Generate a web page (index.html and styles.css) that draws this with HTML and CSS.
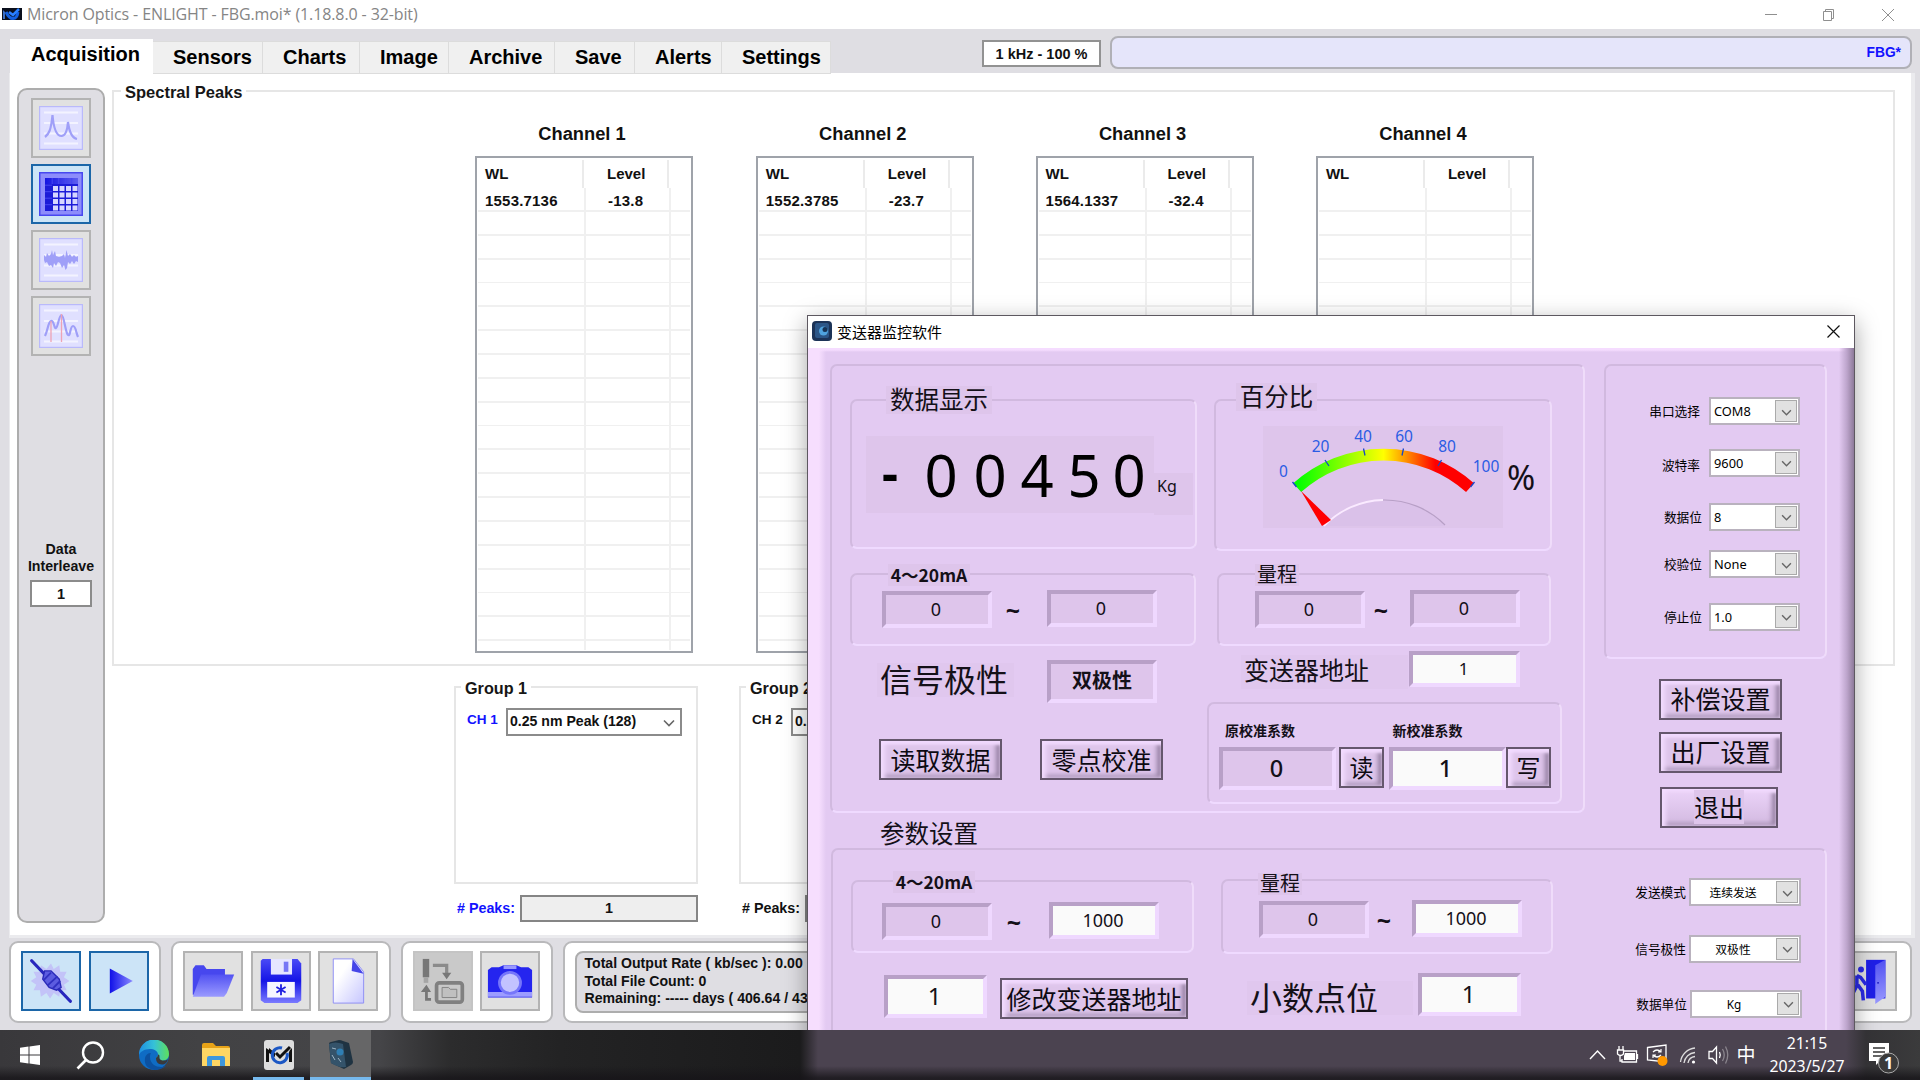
FILE: index.html
```html
<!DOCTYPE html>
<html lang="zh-CN">
<head>
<meta charset="utf-8">
<title>Micron Optics - ENLIGHT</title>
<link rel="stylesheet" href="styles.css">
</head>
<body>
<svg class="defs" width="0" height="0" aria-hidden="true">
  <defs>
    <linearGradient id="blueV" x1="0" y1="0" x2="0" y2="1"><stop offset="0" stop-color="#4a4af6"/><stop offset=".5" stop-color="#1414e6"/><stop offset="1" stop-color="#7b7bff"/></linearGradient>
    <linearGradient id="blueH" x1="0" y1="0" x2="1" y2="0"><stop offset="0" stop-color="#1010e8"/><stop offset="1" stop-color="#8a8aff"/></linearGradient>
    <linearGradient id="folderG" x1="0" y1="0" x2="0" y2="1"><stop offset="0" stop-color="#5252f2"/><stop offset="1" stop-color="#9a9aff"/></linearGradient>
    <linearGradient id="paperG" x1="0" y1="0" x2="1" y2="1"><stop offset=".3" stop-color="#fff"/><stop offset="1" stop-color="#c6c6ff"/></linearGradient>
    <linearGradient id="edgeG" x1="0" y1="0" x2="1" y2="0"><stop offset="0" stop-color="#1e8fe0"/><stop offset=".5" stop-color="#35c1d8"/><stop offset="1" stop-color="#5fe05a"/></linearGradient>
    <linearGradient id="gaugeG" gradientUnits="userSpaceOnUse" x1="34" y1="0" x2="207" y2="0"><stop offset="0" stop-color="#00ff00"/><stop offset=".5" stop-color="#ffff00"/><stop offset=".8" stop-color="#ff0000"/><stop offset="1" stop-color="#ff0000"/></linearGradient>
    <symbol id="chev" viewBox="0 0 12 8"><path d="M1 1.500 6 6.500 11 1.500" fill="none" stroke="#666" stroke-width="1.600"/></symbol>
    <symbol id="frame" viewBox="0 0 44 44"><rect x=".5" y=".5" width="43" height="43" fill="#e0e0ff" stroke="#b9b9fb" stroke-width="1.400"/><path d="M5 6.500h34M5 17h34M5 27.500h34M5 37.500h34" stroke="#f3f3ff" stroke-width="2"/></symbol>
  </defs>
</svg>

<div class="desktop">
  <header class="titlebar">
    <svg class="app-logo" viewBox="0 0 20 12"><rect width="20" height="12" fill="#0a0f1c"/><path d="M4 4Q7 10.500 11 10.500T16 4" stroke="#1360e0" stroke-width="3" fill="none"/><path d="M7 4l4 3 6-6" stroke="#2a80ff" stroke-width="2.500" fill="none"/><path d="M1 11V2l2 2v7z" fill="#3b6fc4"/></svg>
    <span class="titlebar-text">Micron Optics - ENLIGHT - FBG.moi* (1.18.8.0 - 32-bit)</span>
    <svg class="win-controls" viewBox="0 0 130 14"><path d="M1 6.500h12M118 1l12 12M130 1l-12 12" stroke="#8f8f8f" fill="none"/><path d="M59.500 3.500h8v9h-8zM61.500 3.500v-2h8v9h-2" stroke="#8f8f8f" fill="none"/></svg>
  </header>

  <div class="workspace">
    <nav class="tabbar">
      <span class="tab tab-active">Acquisition</span>
      <span class="tab t-sensors">Sensors</span>
      <span class="tab t-charts">Charts</span>
      <span class="tab t-image">Image</span>
      <span class="tab t-archive">Archive</span>
      <span class="tab t-save">Save</span>
      <span class="tab t-alerts">Alerts</span>
      <span class="tab t-settings">Settings</span>
      <span class="rate-box">1 kHz - 100 %</span>
      <span class="config-name">FBG*</span>
    </nav>

    <main class="page">
      <aside class="toolbox">
        <button class="tool"><svg class="ic44" viewBox="0 0 44 44"><use href="#frame"/><path d="M6 31C10 28 12 24 13.500 9c1 12 4 21 9 21s6-8 6.500-14C30 24 33 32 38 33" fill="none" stroke="#9f9ff8" stroke-width="2.200"/></svg></button>
        <button class="tool tool-on"><svg class="ic44" viewBox="0 0 44 44"><rect x=".7" y=".7" width="42.600" height="42.600" fill="#8d8dfb" stroke="#4848f0" stroke-width="1.600"/><rect x="6" y="6" width="33" height="33" fill="#1c1cd8"/><path d="M6 6h33v6H6z" fill="url(#blueH)" opacity=".6"/><path d="M14 14h5v5h-5zm6.500 0h5v5h-5zm6.500 0h5v5h-5zm6.500 0h5v5h-5zM14 20.500h5v5h-5zm6.500 0h5v5h-5zm6.500 0h5v5h-5zm6.500 0h5v5h-5zM14 27h5v5h-5zm6.500 0h5v5h-5zm6.500 0h5v5h-5zm6.500 0h5v5h-5zM14 33.500h5v5h-5zm6.500 0h5v5h-5zm6.500 0h5v5h-5zm6.500 0h5v5h-5z" fill="#d6d6ff"/><path d="M6 13.200h7M6 19.700h7M6 26.200h7M6 32.700h7M13.200 6v6M19.700 6v6M26.200 6v6M32.700 6v6" stroke="#4646f2"/></svg></button>
        <button class="tool"><svg class="ic44" viewBox="0 0 44 44"><use href="#frame"/><path d="M5 17 7 19 8 15 10 18 12 16 13 12 14 17 16 13 17 18 20 19 23 18 25 16 26 20 27.500 12 29 18 31 16 33 19 35 17 37 19 39 18V24L37 23 35 26 33 23 31 26 29 24 28 30 26.500 32 25 27 23 30 21 25 19 24 17 28 15 25 14 30 12 27 10 28 8 24 6 25 5 22z" fill="#9f9ff8"/></svg></button>
        <button class="tool"><svg class="ic44" viewBox="0 0 44 44"><use href="#frame"/><path d="M6 32 C9 26 9 18 12 17s3 8 5 7 3-13 5.500-13 4 18 6.500 20 2-9 5-9 3 7 5 11" fill="none" stroke="#9f9ff8" stroke-width="2.200"/><path d="M12 17v21M22.500 10v28" stroke="#efa3b4" stroke-width="1.300"/></svg></button>
        <span class="interleave-label">Data<br>Interleave</span>
        <span class="interleave-value">1</span>
      </aside>

      <div class="content">
        <section class="spectral">
          <h2 class="box-legend spectral-legend">Spectral Peaks</h2>
          <div class="channels">
            <div class="channel"><h3>Channel 1</h3><div class="peaks"><div class="peaks-head"><span>WL</span><span>Level</span><i></i></div><div class="peaks-rows"><div class="peak"><span>1553.7136</span><span>-13.8</span></div></div></div></div>
            <div class="channel ch-two"><h3>Channel 2</h3><div class="peaks"><div class="peaks-head"><span>WL</span><span>Level</span><i></i></div><div class="peaks-rows"><div class="peak"><span>1552.3785</span><span>-23.7</span></div></div></div></div>
            <div class="channel"><h3>Channel 3</h3><div class="peaks"><div class="peaks-head"><span>WL</span><span>Level</span><i></i></div><div class="peaks-rows"><div class="peak"><span>1564.1337</span><span>-32.4</span></div></div></div></div>
            <div class="channel"><h3>Channel 4</h3><div class="peaks"><div class="peaks-head"><span>WL</span><span>Level</span><i></i></div><div class="peaks-rows"></div></div></div>
          </div>
        </section>
        <div class="groups">
          <div class="group">
            <section class="group-box"><h2 class="box-legend group-legend">Group 1</h2>
              <div class="ch-row"><span class="ch-label blue">CH 1</span><span class="ch-select">0.25 nm Peak (128)<svg class="chev"><use href="#chev"/></svg></span></div>
            </section>
            <div class="peak-count"><span class="blue">#&nbsp;Peaks:</span><output>1</output></div>
          </div>
          <div class="group">
            <section class="group-box"><h2 class="box-legend group-legend">Group 2</h2>
              <div class="ch-row"><span class="ch-label">CH 2</span><span class="ch-select">0.25 nm</span></div>
            </section>
            <div class="peak-count"><span>#&nbsp;Peaks:</span><output></output></div>
          </div>
        </div>
      </div>
    </main>

    <footer class="actions">
      <div class="action-group">
        <button class="tool tool-on"><svg class="ic50" viewBox="0 0 50 50"><path d="M25 6l3 6 6-4 1 7 7 0-3 6 6 4-6 4 3 6-7 0-1 7-6-4-4 6-4-6-6 4-1-7-7 0 3-6-6-4 6-4-3-6 7 0 1-7 6 4z" fill="#c3c3f8"/><path d="M4 3 46 47" stroke="#2727bd" stroke-width="3.500" stroke-linecap="round"/><path d="M18 14l7 0 9 9 2 9-5 3-8-3-7-9z" fill="#5c5ce0" stroke="#2929b8" stroke-width="1.500"/><path d="M17 24l8-8M21 30l11-10M27 33l8-8" stroke="#3030c0" stroke-width="2"/></svg></button>
        <button class="tool tool-on"><svg class="ic50" viewBox="0 0 50 50"><path d="M15 11.500 40 25 15 38.500z" fill="url(#blueH)"/></svg></button>
      </div>
      <div class="action-group">
        <button class="tool"><svg class="ic50" viewBox="0 0 50 50"><path d="M3 40V12l3-4h9l3 4h20v8H18L7 40z" fill="#4747ee"/><path d="M12 18h36l-8 20-3 4H3z" fill="url(#folderG)"/></svg></button>
        <button class="tool"><svg class="ic50" viewBox="0 0 50 50"><path d="M5 1h38l4 5v40l-4 3H7l-4-3V3z" fill="url(#blueV)"/><rect x="14" y="1" width="23" height="17" fill="#e6e6ff"/><rect x="28" y="4" width="5" height="11" fill="#7676f5"/><rect x="10" y="26" width="30" height="17" fill="#f5f5ff"/><path d="M25 28.500v12M20 31.500l10 6M30 31.500l-10 6" stroke="#2020e0" stroke-width="2"/></svg></button>
        <button class="tool"><svg class="ic50" viewBox="0 0 50 50"><path d="M9 1h22l11 14v34H9z" fill="url(#paperG)" stroke="#8a8af5"/><path d="M30 1 42 17 29 14z" fill="#4646e8"/></svg></button>
      </div>
      <div class="action-group">
        <button class="tool tool-off"><svg class="ic50" viewBox="0 0 50 50"><rect x="3" y="1" width="7" height="20" fill="#777"/><path d="M4 21h5v6H4z" fill="#a5a5a5"/><path d="M14 8h15v10" fill="none" stroke="#8b8b8b" stroke-width="3.500"/><path d="M24 16h10l-5 7zM1 37l6-8 5 8z" fill="#777"/><path d="M7 36v9h5" fill="none" stroke="#777" stroke-width="3"/><rect x="18" y="27" width="28" height="21" rx="3" fill="none" stroke="#808080" stroke-width="4"/><path d="M24 32h7l2 2h7v9H24z" fill="#c0c0c0" stroke="#808080"/></svg></button>
        <button class="tool"><svg class="ic50" viewBox="0 0 50 50"><path d="M1 13l4-3h8l5-2h14l5 2h8l4 3v30H1z" fill="#2525ef"/><path d="M1 37h48v5H1z" fill="#9c9cff"/><circle cx="25" cy="27" r="11.500" fill="#c3c3ff" stroke="#7676fa" stroke-width="3"/><path d="M18 8h14v4H18z" fill="#9898ff"/></svg></button>
      </div>
      <div class="action-group action-status">
        <p class="status-text"><span>Total Output Rate ( kb/sec ): 0.00</span><span>Total File Count: 0</span><span>Remaining: ----- days ( 406.64 / 437</span></p>
        <button class="tool"><svg class="ic50" viewBox="0 0 50 50"><path d="M24 2h21v42H24z" fill="#1f1fe8"/><path d="M34 8l11-6v40l-11 8z" fill="url(#folderG)"/><circle cx="37" cy="27" r="1" fill="#1515c0"/><circle cx="18.500" cy="12.500" r="3.200" fill="#2a2ae8"/><path d="M14 19l4 2 6 8M14 19v11l-5 10M15 29l5 7 1 10" stroke="#2a2ae8" stroke-width="3.800" fill="none"/></svg></button>
      </div>
    </footer>
  </div>

  <div class="dialog">
    <header class="dialog-title">
      <svg class="dlg-icon" viewBox="0 0 20 20"><rect width="20" height="20" rx="4" fill="#1c3357"/><rect x="3" y="2" width="14" height="15" rx="2" fill="#2c5687"/><circle cx="11.500" cy="10" r="4.500" fill="#4fa3df"/><circle cx="13" cy="8.500" r="2.500" fill="#173355"/></svg>
      <span>变送器监控软件</span>
      <svg class="dlg-close" viewBox="0 0 13 13"><path d="M.5.5l12 12M12.500.5l-12 12" stroke="#111" stroke-width="1.200"/></svg>
    </header>
    <div class="dialog-body">
      <div class="top">
        <section class="panel panel-main">
          <div class="row row-display">
            <div class="panel p-data"><h4 class="legend lg-data">数据显示</h4>
              <div class="readout"><div class="digits"><b>-</b><span>0</span><span>0</span><span>4</span><span>5</span><span>0</span></div><span class="unit">Kg</span></div>
            </div>
            <div class="panel p-percent"><h4 class="legend lg-percent">百分比</h4>
              <div class="gauge-row">
                <svg class="gauge" viewBox="0 0 240 102">
                  <path d="M61 100A85 85 0 0 1 182 100z" fill="#dac1e9"/>
                  <path d="M34.200 61.700A129.400 129.400 0 0 1 207 61.700" fill="none" stroke="url(#gaugeG)" stroke-width="11.800"/>
                  <path d="M61 100A85 85 0 0 1 120 74" fill="none" stroke="#faeaff" stroke-width="1.800"/>
                  <path d="M120 74A85 85 0 0 1 182 99" fill="none" stroke="#b79fc6" stroke-width="1.200"/>
                  <path d="M38 65 68 94 59 100z" fill="#f00"/>
                  <path d="M29.500 56l4 5M62 34l4 6M100.500 22.500l1.500 7M140.500 22.500l-1.500 7M178.500 34l-3.500 6M211.500 56l-4 5" stroke="#1746c8" stroke-width="1.300"/>
                  <g class="gauge-num"><text x="20.500" y="51">0</text><text x="57.500" y="26">20</text><text x="100" y="15.800">40</text><text x="141" y="15.800">60</text><text x="184" y="26">80</text><text x="223" y="46">100</text></g>
                </svg>
                <span class="percent">%</span>
              </div>
            </div>
          </div>
          <div class="row row-ranges">
            <div class="panel p-ma"><h4 class="legend lg-ma">4～20mA</h4><div class="fields"><span class="field">0</span><b class="tilde">~</b><span class="field up">0</span></div></div>
            <div class="panel p-range"><h4 class="legend lg-range">量程</h4><div class="fields"><span class="field">0</span><b class="tilde">~</b><span class="field up">0</span></div></div>
          </div>
          <div class="row">
            <div class="left-col">
              <div class="row polarity"><span class="caption cap-polarity">信号极性</span><span class="field field-polarity">双极性</span></div>
              <div class="row left-buttons"><button class="btn">读取数据</button><button class="btn">零点校准</button></div>
            </div>
            <div class="right-col">
              <div class="row address"><span class="caption cap-address">变送器地址</span><span class="field field-address edit">1</span></div>
              <div class="panel p-cal">
                <div class="row cal-labels"><span>原校准系数</span><span>新校准系数</span></div>
                <div class="row cal-fields"><span class="field field-cal">0</span><button class="btn btn-sq">读</button><span class="field field-cal edit">1</span><button class="btn btn-sq">写</button></div>
              </div>
            </div>
          </div>
        </section>
        <div class="side">
          <section class="panel p-comm">
            <label>串口选择<span class="combo">COM8<i><svg class="chev"><use href="#chev"/></svg></i></span></label>
            <label class="l-baud"><em>波特率</em><span class="combo">9600<i><svg class="chev"><use href="#chev"/></svg></i></span></label>
            <label class="l-bit">数据位<span class="combo">8<i><svg class="chev"><use href="#chev"/></svg></i></span></label>
            <label class="l-bit">校验位<span class="combo">None<i><svg class="chev"><use href="#chev"/></svg></i></span></label>
            <label class="l-bit">停止位<span class="combo">1.0<i><svg class="chev"><use href="#chev"/></svg></i></span></label>
          </section>
          <div class="side-buttons"><button class="btn">补偿设置</button><button class="btn">出厂设置</button><button class="btn btn-exit"><span>退出</span></button></div>
        </div>
      </div>
      <h3 class="params-title">参数设置</h3>
      <section class="panel params">
        <div class="params-left">
          <div class="row">
            <div class="panel p2-ma"><h4 class="legend lg-ma">4～20mA</h4><div class="fields"><span class="field">0</span><b class="tilde">~</b><span class="field up edit">1000</span></div></div>
            <div class="panel p2-range"><h4 class="legend lg-range">量程</h4><div class="fields"><span class="field">0</span><b class="tilde">~</b><span class="field up edit">1000</span></div></div>
          </div>
          <div class="row params-bottom">
            <span class="field field-big edit f-addr">1</span><button class="btn btn-modify">修改变送器地址</button>
            <span class="caption cap-decimal">小数点位</span><span class="field field-big edit">1</span>
          </div>
        </div>
        <div class="params-right">
          <label>发送模式<span class="combo combo-c"><u>连续发送</u><i><svg class="chev"><use href="#chev"/></svg></i></span></label>
          <label>信号极性<span class="combo combo-c"><u>双极性</u><i><svg class="chev"><use href="#chev"/></svg></i></span></label>
          <label class="l-unit">数据单位<span class="combo combo-c"><u>Kg</u><i><svg class="chev"><use href="#chev"/></svg></i></span></label>
        </div>
      </section>
    </div>
  </div>

  <div class="taskbar">
    <span class="task t-start"><svg width="20" height="20" viewBox="0 0 20 20"><path d="M0 2.800 8.500 1.600V9.500H0zM9.500 1.500 20 0v9.500H9.500zM0 10.500h8.500v7.900L0 17.200zM9.500 10.500H20V20L9.500 18.500z" fill="#fff"/></svg></span>
    <span class="task t-search"><svg width="29" height="29" viewBox="0 0 29 29"><circle cx="17" cy="11.500" r="10" fill="none" stroke="#fff" stroke-width="2.400"/><path d="M10 19 1.500 27.500" stroke="#fff" stroke-width="2.600"/></svg></span>
    <span class="task t-edge"><svg width="30" height="30" viewBox="0 0 30 30"><circle cx="15" cy="15" r="15" fill="#0f6cc4"/><path d="M0 15A15 15 0 0 1 30 14c0 5-4 7-8 7-3 0-5-1-5-2.500S19 17 19 14.500C19 11 15 9 11 9 5 9 1 12 0 15z" fill="url(#edgeG)"/><path d="M11 17c0 7 6 10 11 10 2 0 4-.6 5.500-1.800C25 28 20 30 15.500 30 8 29 5 24 6 18c.6-3 2.600-5 6-5-.7 1-1 2.500-1 4z" fill="#0c51a0"/><path d="M17 18.500c0-1.500 2-1.500 2-4 3 0 0 4 3 5.500 3 1 6 .5 7-1-1 4-3 5.500-6 5.500-4 0-6-3-6-6z" fill="#39393c"/></svg></span>
    <span class="task t-folder"><svg width="28" height="24" viewBox="0 0 28 24"><path d="M0 2q0-2 2-2h9l3 3h12q2 0 2 2v16H0z" fill="#e8a317"/><path d="M0 5h28v18H0z" fill="#ffd663"/><path d="M5 23v-8q0-2 2-2h14q2 0 2 2v8h-5v-6h-8v6z" fill="#3f97dc"/></svg></span>
    <span class="task t-mo"><svg width="30" height="30" viewBox="0 0 30 30"><rect width="30" height="30" rx="3" fill="#dedede"/><path d="M2 8l3 2v12H2zM5 8l6 5v4L5 13zM26 10l2-2v14h-3V12z" fill="#111"/><path d="M23 13a7.500 7.500 0 1 1-5-5" fill="none" stroke="#1b57c4" stroke-width="3"/><path d="M12 13l4 4L26 7" fill="none" stroke="#111" stroke-width="3"/></svg></span>
    <span class="task t-dlg"><svg width="30" height="30" viewBox="0 0 30 30"><path d="M3 4Q3 2 5 2L13 0q2 0 4 1l6 2 4 19q0 2-2 3l-7 4L5 23z" fill="#1f3342"/><path d="M3 4Q9 1 17 4l3 23q-8 1-15-4z" fill="#34536a"/><circle cx="14" cy="12" r="3.500" fill="#2f7fb4"/><path d="M6 8l4 1M6 15l3 5M12 18l3 4" stroke="#9db5c5"/></svg></span>
    <span class="tray">
      <svg width="110" height="26" viewBox="0 0 110 26" class="tray-left"><path d="M1 17l7.500-8L16 17" fill="none" stroke="#fff" stroke-width="1.400"/><path d="M34 9h13.500v11H33v-3M48.500 12v5M30 4v4M34 4v4M28.500 8h6v4q-3 3-6 0zM31 14v5h2" fill="none" stroke="#fff" stroke-width="1.300"/><path d="M36 11h10v7H35v-4z" fill="#fff"/><path d="M58.500 5.500 77 3v17l-18.500-2z" fill="none" stroke="#fff" stroke-width="1.300"/><path d="M64 10q4-4 8 0m0-3v3h-3M72 13q-4 4-8 0m0 3v-3h3" fill="none" stroke="#fff" stroke-width="1.200"/><circle cx="73.500" cy="19" r="5" fill="#ff9800"/><path d="M91.500 20A16 16 0 0 1 106 6M95 21A12 12 0 0 1 106 10.500M99 21A8 8 0 0 1 106 14.500" fill="none" stroke="#ddd" stroke-width="1.300"/><circle cx="104.500" cy="20" r="1.600" fill="#fff"/></svg>
      <svg width="21" height="22" viewBox="0 0 21 22" class="tray-vol"><path d="M1 7.500h3.500l4-4.500v16l-4-4.500H1z" fill="none" stroke="#fff" stroke-width="1.300"/><path d="M11.500 8q1.500 3 0 6" stroke="#fff" fill="none" stroke-width="1.300"/><path d="M14.500 5q3.500 6 0 12M17.500 2.500q4.500 8.500 0 17" stroke="#8a858d" fill="none" stroke-width="1.300"/></svg>
      <span class="ime">中</span>
      <span class="clock"><span>21:15</span><span>2023/5/27</span></span>
      <svg width="32" height="34" viewBox="0 0 32 34" class="notify"><path d="M0 2h20v18h-9l-4 4v-4H0z" fill="#fff"/><path d="M4 7h12M4 11h12M4 15h9" stroke="#333" stroke-width="1.400"/><circle cx="19.500" cy="22" r="10" fill="#3a3a3a" stroke="#aaa"/><text x="19.500" y="27.500" class="notify-n">1</text></svg>
    </span>
  </div>
</div>
</body>
</html>
```

FILE: styles.css
```css
* { box-sizing: border-box; }
body, h2, h3, h4, p { margin: 0; }
body { width: 1920px; height: 1080px; overflow: hidden; font-family: "Liberation Sans", Arial, "Noto Sans CJK SC", sans-serif; color: #111; }
button { padding: 0; margin: 0; font: inherit; color: inherit; }
.defs { position: absolute; }
.desktop { position: relative; width: 1920px; height: 1080px; display: flex; flex-direction: column; overflow: hidden; background: #dfdee3; }
.blue { color: #1212ff; }
.chev { width: 12px; height: 8px; flex: none; }
.row { display: flex; align-items: flex-start; }

/* main window */
.titlebar { height: 29px; flex: none; display: flex; align-items: center; background: #fff; padding: 0 26px 0 2px; }
.app-logo { width: 20px; height: 12px; margin-top: -1px; }
.titlebar-text { margin: -2px 0 0 5px; flex: 1; font: 16px "Open Sans", "Noto Sans", sans-serif; letter-spacing: -.11px; color: #858585; white-space: nowrap; }
.win-controls { width: 130px; height: 14px; }
.workspace { height: 1001px; flex: none; background: #dfdee3; }

.tabbar { height: 44px; display: flex; align-items: flex-start; padding: 10px 0 0 10px; font-size: 20px; font-weight: bold; white-space: nowrap; }
.tab { height: 33px; margin-top: 2px; padding: 3px 0 0 20px; background: #f0f0f0; border: 1px solid #dcdcdc; border-left: 0; line-height: 24px; color: #000; }
.tab-active { width: 143px; height: 35px; margin-top: 0; padding: 3px 0 0 21px; background: #fff; border: 0; }
.t-sensors { width: 110px; }
.t-charts { width: 97px; }
.t-image { width: 89px; }
.t-archive { width: 106px; }
.t-save { width: 80px; }
.t-alerts { width: 87px; }
.t-settings { width: 109px; }
.rate-box { width: 119px; height: 27px; margin: 1px 0 0 151px; border: 2px solid #929292; background: #fff; font-size: 14.500px; line-height: 24px; text-align: center; }
.config-name { width: 802px; height: 33px; margin: -3px 0 0 9px; padding-right: 9px; border: 2px solid #b0b0b6; border-radius: 8px; background: #e5e5fa; color: #1212ff; font-size: 13.800px; line-height: 29px; text-align: right; }

.page { display: flex; align-items: flex-start; width: 1906px; height: 865px; margin-left: 9px; background: #fff; border: solid #ebebee; border-width: 0 4px 3px 1px; }
.toolbox { width: 88px; height: 835px; margin: 15px 0 0 7px; padding-top: 8px; display: flex; flex-direction: column; align-items: center; gap: 6.100px; background: #dfdee3; border: 2px solid #adadad; border-radius: 10px; }
.tool { width: 60px; height: 60px; flex: none; display: flex; align-items: center; justify-content: center; background: #e1e1e1; border: 2px solid #b3b3b3; }
.tool-on { background: #cce4f7; border-color: #1c66a8; }
.tool-off { background: #c9c9c9; border-color: #c4c4c4; }
.ic44 { width: 44px; height: 44px; }
.ic50 { width: 46px; height: 46px; }
.interleave-label { margin-top: 179px; font-size: 14.200px; font-weight: bold; line-height: 17px; text-align: center; }
.interleave-value { width: 62px; height: 27px; margin-top: -1px; border: 2px solid #8b8b8b; background: #fff; font-size: 14.500px; font-weight: bold; line-height: 24px; text-align: center; }

.content { margin-left: 7px; }
.spectral { width: 1783px; height: 576px; margin-top: 17px; border: 2px solid #e6e6e6; }
.box-legend { width: max-content; background: #fff; font-size: 16.500px; line-height: 20px; white-space: nowrap; color: #161616; }
.spectral-legend { margin: -10px 0 0 7px; padding: 0 4px; }
.channels { display: flex; gap: 62.300px; margin: 20px 0 0 361px; }
.channel { width: 218px; }
.ch-two { margin: 0 -.5px 0 .5px; }
.channel h3 { height: 34px; margin-left: -4px; font-size: 18.300px; line-height: 24px; text-align: center; }
.peaks { height: 497px; border: 2px solid #9fa3aa; background: #fff; font-size: 15px; font-weight: bold; padding: 1px; display: flex; flex-direction: column; }
.peaks-head { height: 29px; flex: none; display: grid; grid-template-columns: 106px 85px 1fr; line-height: 28px; padding-top: 1px; }
.peaks-head span { border-right: 2px solid #ebebeb; padding-left: 7px; }
.peaks-head span + span { padding-left: 23px; }
.peaks-rows { flex: 1; background: linear-gradient(90deg, transparent 106px, #f0f0f0 106px 108px, transparent 108px 191px, #f0f0f0 191px 193px, transparent 193px), repeating-linear-gradient(180deg, #fff 0 22px, #f0f0f0 22px 23.850px); }
.peak { display: grid; grid-template-columns: 105px 86px; line-height: 26px; }
.peak span { padding-left: 7px; letter-spacing: .2px; }
.peak span + span { padding-left: 25px; }

.groups { display: flex; gap: 41px; margin: 20px 0 0 342px; }
.group { width: 244px; }
.group-box { height: 198px; border: 2px solid #e6e6e6; }
.group-legend { margin: -10px 0 0 5px; padding: 0 4px; font-size: 16.200px; }
.ch-row { display: flex; align-items: flex-start; margin: 10px 0 0 11px; font-weight: bold; }
.ch-label { width: 39px; padding-top: 4px; font-size: 13.500px; line-height: 16px; white-space: nowrap; }
.ch-select { width: 176px; height: 28px; display: flex; align-items: center; justify-content: space-between; padding: 0 5px 2px 2px; border: 2px solid #8b8b8b; background: #fff; font-size: 14.100px; white-space: nowrap; }
.ch-select .chev { margin-top: 4px; }
.peak-count { display: flex; align-items: center; margin-top: 11px; padding-left: 3px; font-size: 14.300px; font-weight: bold; line-height: 23px; }
.peak-count span { width: 63px; white-space: nowrap; }
.peak-count output { width: 178px; height: 27px; border: 2px solid #858585; background: #eee; text-align: center; }

.actions { display: flex; margin: 3px 0 0 9px; }
.action-group { display: flex; gap: 7.500px; height: 82px; padding: 8px 10.500px 8px 10px; margin-right: 10px; background: #fff; border: 2px solid #b9b9bb; border-radius: 9px; }
.action-status { width: 1349px; margin-right: 0; justify-content: space-between; padding-right: 13px; }
.status-text { width: 1200px; height: 62px; display: flex; flex-direction: column; padding: 2px 8px; background: #dfdee3; border: 2px solid #adadad; border-radius: 8px; font-size: 14.100px; font-weight: bold; line-height: 17.600px; white-space: pre; }

/* transmitter monitor dialog */
.dialog { position: absolute; left: 807px; top: 315px; width: 1048px; height: 760px; border: 1px solid #5d5860; background: #e3caf2; box-shadow: 0 7px 22px rgba(0,0,0,.36); font-family: "Noto Sans", "Noto Sans CJK SC", sans-serif; color: #141018; }
.dialog-title { height: 32px; display: flex; align-items: center; padding: 0 14px 2px 4px; background: #fff; font-size: 15px; color: #000; }
.dialog-title span { margin-left: 5px; flex: 1; }
.dlg-icon { width: 20px; height: 20px; }
.dlg-close { width: 13px; height: 13px; }
.dialog-body { height: 726px; padding: 16px 0 0 22px; background: linear-gradient(90deg, #f6defe 0 11px, transparent 18px calc(100% - 15px), #bca4cb calc(100% - 7px), #8d7a99 100%), linear-gradient(#f5dcff 0 2px, #e3caf2 4px); }
.panel { border: 2px solid; border-color: #d1b9df #efdcfa #efdaff #d1b9df; border-radius: 7px; }
.top { display: flex; gap: 19px; height: 449px; }
.panel-main { width: 755px; height: 449px; flex: none; }
.row-display { margin: 33px 0 0 18px; gap: 17px; }
.p-data { width: 347px; height: 150px; }
.p-percent { width: 338px; height: 152px; }
.legend { font-weight: normal; background: #dec5eb; white-space: nowrap; text-align: center; }
.lg-data { width: 106px; height: 28px; margin: -15px 0 0 34px; font-size: 24.500px; line-height: 28px; }
.lg-percent { width: 81px; height: 28px; margin: -18px 0 0 20px; font-size: 24.500px; line-height: 27px; }
.readout { display: flex; align-items: flex-end; margin: 22px 0 0 14px; }
.digits { width: 288px; height: 77px; display: grid; grid-template-columns: 48px 54px 44px 50px 44px 46px; background: #dec5eb; font-size: 58px; line-height: 78px; text-align: center; color: #000; }
.digits b { font-size: 50px; line-height: 72px; }
.unit { width: 39px; height: 42px; margin-bottom: -2px; padding-left: 3px; background: #dec5eb; font-size: 16px; line-height: 27px; }
.gauge-row { display: flex; margin: 15px 0 0 47px; }
.gauge { width: 240px; height: 102px; background: #dec5eb; flex: none; }
.gauge-num { font-size: 15.500px; fill: #2b5ce4; text-anchor: middle; }
.percent { margin: 28px 0 0 4px; font-size: 34px; line-height: 46px; }
.row-ranges { margin: 22px 0 0 18px; gap: 21px; }
.p-ma { width: 346px; height: 73px; }
.p-range { width: 334px; height: 73px; }
.lg-ma { width: 82px; height: 22px; margin: -11px 0 0 36px; font-family: "Noto Sans CJK SC", sans-serif; font-size: 17.500px; font-weight: bold; line-height: 22px; }
.lg-range { width: 44px; height: 22px; margin: -11px 0 0 36px; font-size: 20px; line-height: 22px; }
.fields { display: flex; align-items: flex-start; margin: 5px 0 0 30px; }
.p-range .fields { margin-left: 36px; }
.field { width: 110px; height: 37px; flex: none; padding-right: 2px; border: 4px solid; border-color: #b8a0c7 #efd8ff #efd8ff #b8a0c7; background: #dec5eb; font-size: 18px; line-height: 29px; text-align: center; }
.edit { background: #fafafa; }
.up { margin-top: -1px; }
.tilde { width: 55px; padding-right: 13px; font-size: 25px; line-height: 38px; text-align: center; }
.p-range .tilde { width: 45px; }
.left-col { width: 375px; flex: none; }
.polarity { margin-top: 14px; }
.caption { flex: none; background: #e0c7ee; white-space: nowrap; }
.cap-polarity { width: 137px; height: 34px; margin: 3px 33px 0 45px; padding-left: 3px; font-size: 32px; line-height: 33px; }
.field-polarity { height: 43px; padding: 0; font-size: 20px; font-weight: bold; line-height: 33px; }
.left-buttons { margin: 36px 0 0 47px; gap: 38px; }
.btn { width: 123px; height: 41px; flex: none; border: 2px solid #65576d; background: #dec5eb; box-shadow: inset 4px 0 4px #f3dcff, inset 0 4px 3px #f0d8fd, inset -4px 0 5px #947fa1, inset 0 -3px 4px #ac96ba; font-size: 25px; line-height: 36px; white-space: nowrap; color: #0d0a12; }
.address { margin-top: 5px; }
.cap-address { width: 167px; height: 34px; margin: 4px 1px 0 34px; padding-left: 3px; font-size: 25px; line-height: 31px; }
.field-address { width: 111px; height: 36px; font-size: 17px; line-height: 28px; }
.p-cal { width: 355px; height: 102px; margin-top: 13px; }
.cal-labels { margin: 17px 0 0 16px; font-size: 14px; font-weight: bold; line-height: 20px; }
.cal-labels span { width: 168px; }
.cal-fields { margin: 6px 0 0 10px; }
.field-cal { width: 117px; height: 43px; font-size: 23.500px; font-weight: 500; line-height: 35px; }
.btn-sq { width: 45px; margin: 0 5px 0 3px; font-size: 24px; }
.field-cal.edit { padding-right: 4px; }
.field-cal.edit + .btn-sq { margin: 0; }

.side { width: 223px; flex: none; }
.p-comm { height: 295px; padding-top: 31px; display: grid; grid-template-rows: 51.500px 54px 47.500px 52.500px 28px; align-items: start; }
.p-comm label, .params-right label { display: flex; align-items: center; justify-content: flex-end; font-size: 12.700px; line-height: 20px; white-space: nowrap; color: #000; }
.p-comm label { padding-right: 25px; }
.l-baud em { font-style: normal; padding-top: 5px; }
.combo { width: 91px; height: 28px; margin-left: 9px; padding: 0 1px 0 3px; display: flex; align-items: center; justify-content: space-between; background: #fff; border: 2px solid #b9b2be; font-size: 12.800px; }
.l-bit .combo { margin-left: 7px; }
.combo i { width: 22px; height: 22px; display: flex; align-items: center; justify-content: center; border: 1px solid #aaa; background: #e1e1e1; }
.combo i .chev { width: 11px; height: 7px; margin-top: 2px; }
.side-buttons { display: flex; flex-direction: column; gap: 12px; margin: 20px 0 0 55px; }
.side-buttons .btn { line-height: 35px; }
.side-buttons .btn-exit { width: 118px; margin: 2px 0 0 1px; background: linear-gradient(#ecd4f9, #d2b9e0); }
.btn-exit span { background: #dec5eb; }

.params-title { height: 31px; margin: 4px 0 0 50px; font-size: 24.500px; font-weight: normal; line-height: 33px; }
.params { width: 996px; height: 230px; margin-left: 1px; display: flex; }
.params-left { width: 766px; flex: none; padding-top: 29px; }
.p2-ma { width: 343px; height: 73px; margin: 1px 0 0 18px; }
.p2-range { width: 332px; height: 75px; margin-left: 27px; }
.p2-ma .lg-ma { margin: -11px 0 0 40px; }
.p2-range .lg-range { margin: -8px 0 0 35px; }
.p2-ma .fields { margin: 10px 0 0 29px; }
.p2-ma .tilde { width: 57px; }
.p2-range .fields { margin: 6px 0 0 36px; }
.p2-range .tilde { width: 43px; }
.params-bottom { margin-top: 19px; }
.field-big { width: 103px; height: 43px; font-size: 24px; line-height: 34px; }
.f-addr { margin: 2px 13px 0 51px; }
.btn-modify { width: 188px; margin-top: 5px; }
.cap-decimal { width: 166px; height: 34px; margin: 8px 5px 0 59px; padding-left: 3px; font-size: 32px; line-height: 34px; }
.params-right { width: 202px; padding-top: 28px; display: grid; grid-template-rows: 56.500px 55px 28px; align-items: start; }
.combo-c { width: 112px; margin-left: 3px; }
.combo-c u { flex: 1; padding-right: 4px; text-align: center; text-decoration: none; }
.params-right .combo { font-size: 11.800px; }
.l-unit { margin-right: -1px; }

/* taskbar */
.taskbar { position: relative; z-index: 2; height: 50px; flex: none; display: flex; align-items: stretch; color: #fff; background: linear-gradient(180deg, transparent 36px, rgba(22,20,24,.8) 48px), linear-gradient(90deg, #39383b 0, #424244 200px, #454548 380px, #2c2c2d 450px, #232324 560px, #1b1b1c 800px, #4b4350 818px, #4b4350 1846px, #333235 1866px, #3b3b3c 1920px); }
.task { display: flex; align-items: center; justify-content: center; height: 50px; flex: none; }
.t-start { width: 60px; }
.t-search { width: 60px; margin-right: 4px; }
.t-edge { width: 60px; }
.t-folder { width: 63px; }
.t-mo { width: 51px; margin: 0 6px 0 6px; border-bottom: 3px solid #76b9ed; padding-top: 3px; }
.t-dlg { width: 61px; background: #666667; border-bottom: 3px solid #76b9ed; padding-top: 3px; }
.tray { margin-left: auto; display: flex; align-items: center; width: 331px; font-family: "Noto Sans", "Noto Sans CJK SC", sans-serif; }
.tray-vol { margin-left: 9px; }
.ime { width: 20px; margin-left: 7px; font-size: 19px; line-height: 44px; text-align: center; }
.clock { width: 82px; margin-left: 10px; display: flex; flex-direction: column; font-size: 15.800px; line-height: 23px; text-align: center; }
.notify { margin: 5px 0 0 21px; }
.notify-n { font-size: 16px; font-weight: bold; fill: #fff; text-anchor: middle; }
```
